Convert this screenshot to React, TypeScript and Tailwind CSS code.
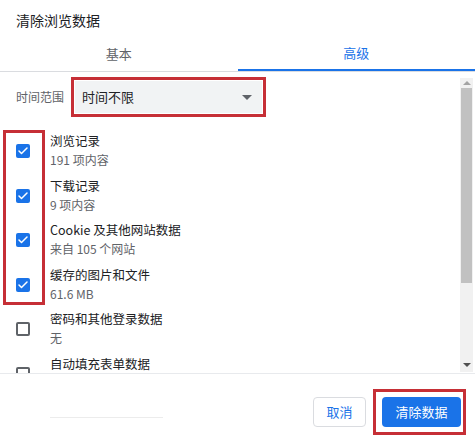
import { Check } from 'lucide-react'

const items = [
	{ title: '浏览记录', sub: '191 项内容', checked: true },
	{ title: '下载记录', sub: '9 项内容', checked: true },
	{ title: 'Cookie 及其他网站数据', sub: '来自 105 个网站', checked: true },
	{ title: '缓存的图片和文件', sub: '61.6 MB', checked: true },
	{ title: '密码和其他登录数据', sub: '无', checked: false },
	{ title: '自动填充表单数据', sub: '', checked: false },
]

const Box = ({ checked }: { checked: boolean }) =>
	checked ? (
		<div className="w-[14px] h-[14px] rounded-[2px] bg-[#1a73e8] flex items-center justify-center">
			<Check size={12} strokeWidth={3} className="text-white" />
		</div>
	) : (
		<div className="w-[14px] h-[14px] rounded-[2px] border-2 border-[#5f6368]" />
	)

export default function App() {
	return (
		<div
			className="relative w-[475px] h-[439px] bg-white overflow-hidden text-[#202124]"
			style={{ fontFamily: '"Noto Sans CJK SC", "Noto Sans", sans-serif' }}
		>
			<div className="h-[36px] pl-4 pt-[10px] text-[14px] leading-[20px]">清除浏览数据</div>

			<div className="flex h-[36px] border-b border-[#dadce0] text-[13px]">
				<div className="flex-1 flex items-center justify-center text-[#5f6368]">基本</div>
				<div className="flex-1 flex items-center justify-center text-[#1a73e8] border-b-2 border-[#1a73e8]">
					高级
				</div>
			</div>

			<div className="flex h-[301px] overflow-hidden">
				<div className="flex-1 flex flex-col">
					<div className="shrink-0 flex items-start h-[57px] pl-4 pt-[5px]">
						<span className="text-[12px] text-[#5f6368] w-[55px] mt-[11px]">时间范围</span>
						<div className="border-[3px] border-[#c62f36] p-[1px] h-[40px] w-[195px]">
							<div className="h-full bg-[#f1f3f4] flex items-center justify-between pl-[7px] pr-[10px] text-[13px]">
								<span>时间不限</span>
								<span className="w-0 h-0 border-l-[5px] border-r-[5px] border-t-[5px] border-l-transparent border-r-transparent border-t-[#5f6368]" />
							</div>
						</div>
					</div>
					<div className="shrink-0">
						{items.map((it) => (
							<div key={it.title} className="flex items-center h-[44.5px]">
								<div className="w-[50px] pl-[16px]">
									<Box checked={it.checked} />
								</div>
								<div className="flex flex-col leading-[19px] self-start pt-[2px]">
									<span className="text-[12.5px]">{it.title}</span>
									<span className="text-[12px] text-[#5f6368]">{it.sub}</span>
								</div>
							</div>
						))}
					</div>
				</div>

				<div className="w-[13px] mr-[2px] mt-[6px] mb-[1px] bg-[#f1f1f1] flex flex-col items-center">
					<div className="h-[10px] flex items-center">
						<span className="w-0 h-0 border-l-[4px] border-r-[4px] border-b-[4px] border-l-transparent border-r-transparent border-b-[#a3a3a3]" />
					</div>
					<div className="w-[11px] h-[195px] bg-[#c1c1c1]" />
					<div className="flex-1" />
					<div className="h-[14px] flex items-center">
						<span className="w-0 h-0 border-l-[4px] border-r-[4px] border-t-[4px] border-l-transparent border-r-transparent border-t-[#505050]" />
					</div>
				</div>
			</div>

			<div className="border-t border-[#e8eaed] h-[66px] flex items-start pt-[15px] pr-[9px]">
				<div className="w-[113px] ml-[50px] mt-[28px] border-t border-[#ececec]" />
				<div className="flex-1" />
				<div className="mt-[8px] h-[30px] w-[53px] flex items-center justify-center border border-[#dadce0] rounded-[4px] text-[13px] text-[#1a73e8]">
					取消
				</div>
				<div className="ml-[7px] border-[3px] border-[#c62f36] pl-[6px] pr-[2px] py-[5px]">
					<div className="h-[30px] w-[79px] flex items-center justify-center bg-[#1a73e8] rounded-[4px] text-[13px] text-white">
						清除数据
					</div>
				</div>
			</div>

			<div className="absolute left-[3px] top-[130px] w-[42px] h-[175px] border-[3px] border-[#c62f36]" />
		</div>
	)
}
